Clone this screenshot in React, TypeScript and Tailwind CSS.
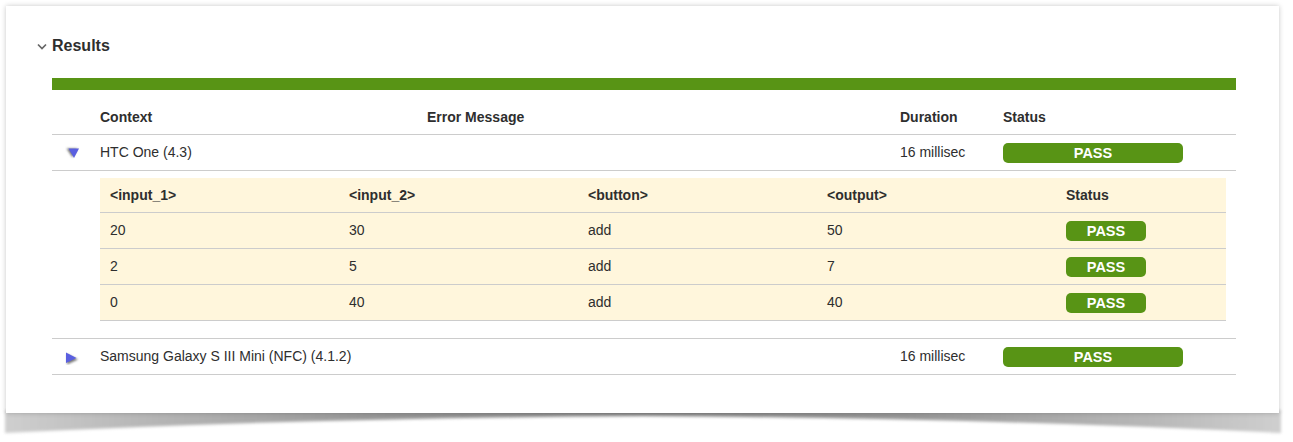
import React from 'react';

const GREEN = 'bg-[#589415]';

const Pass: React.FC<{ wide?: boolean }> = ({ wide }) => (
  <div
    className={`${GREEN} ${wide ? 'w-[180px]' : 'w-[80px]'} h-[20px] pt-[1px] rounded-[5px] flex items-center justify-center text-white font-bold text-[14.5px] leading-none`}
  >
    PASS
  </div>
);

const Triangle: React.FC<{ open?: boolean }> = ({ open }) => (
  <svg width="16" height="16" viewBox="0 0 16 16" className="block">
    <defs>
      <filter id={open ? 'triA' : 'triB'} x="-30%" y="-30%" width="160%" height="160%">
        <feGaussianBlur stdDeviation="0.9" />
      </filter>
    </defs>
    {open ? (
      <>
        <polygon points="1.5,3.5 12.5,3.5 7.5,12.5" fill="#777" filter="url(#triA)" />
        <polygon points="3.5,3.5 14,3.5 9,13" fill="#5a5fe0" />
      </>
    ) : (
      <>
        <polygon points="2,5 2,15.5 13,10.5" fill="#777" filter="url(#triB)" />
        <polygon points="1,3.5 1,14 11.5,9" fill="#5a5fe0" />
      </>
    )}
  </svg>
);

const nested = [
  ['20', '30', 'add', '50'],
  ['2', '5', 'add', '7'],
  ['0', '40', 'add', '40'],
];

const outerCols = 'grid grid-cols-[48px_327px_473px_103px_1fr]';
const innerCols = 'grid grid-cols-[239px_239px_239px_239px_1fr] pl-[10px]';

const DeviceRow: React.FC<{ name: string; open?: boolean; h: string }> = ({ name, open, h }) => (
  <div className={`${outerCols} ${h} items-center border-b border-[#cccccc]`}>
    <div className="pl-[13px]">
      <Triangle open={open} />
    </div>
    <div className="col-span-2">{name}</div>
    <div>16 millisec</div>
    <Pass wide />
  </div>
);

export default function App() {
  return (
    <div className="relative w-[1293px] h-[442px] bg-white overflow-hidden font-['Liberation_Sans',Arial,sans-serif] text-[14px] text-[#2e2e2e]">
      {/* curled page shadow */}
      <svg width="1293" height="442" className="absolute inset-0">
        <defs>
          <linearGradient id="curl" x1="0" x2="1" y1="0" y2="0">
            <stop offset="0" stopColor="#cfcfcf" />
            <stop offset="0.1" stopColor="#b8b8b8" />
            <stop offset="0.3" stopColor="#969696" />
            <stop offset="0.5" stopColor="#858585" />
            <stop offset="0.7" stopColor="#969696" />
            <stop offset="0.9" stopColor="#b8b8b8" />
            <stop offset="1" stopColor="#cfcfcf" />
          </linearGradient>
          <filter id="soft" x="-2%" y="-30%" width="104%" height="160%">
            <feGaussianBlur stdDeviation="1.5" />
          </filter>
        </defs>
        <path d="M5 410 L1281 410 L1281 433 Q 986 418 643 416 Q 300 418 5 433 Z" fill="url(#curl)" filter="url(#soft)" />
      </svg>

      <div className="absolute left-[6px] top-[6px] w-[1273px] h-[407px] bg-white shadow-[0_0_5px_rgba(0,0,0,0.22)]">
        <div className="pl-[46px] pr-[43px]">
          <div className="relative h-[72px] pt-[30px]">
            <svg width="10" height="8" viewBox="0 0 10 8" className="absolute left-[-15px] top-[37px]">
              <path d="M1 1.5 L5 5.5 L9 1.5" fill="none" stroke="#666666" strokeWidth="1.7" />
            </svg>
            <div className="font-bold text-[16px] leading-[20px]">Results</div>
          </div>

          <div className={`${GREEN} h-[12px]`} />

          <div className={`${outerCols} h-[45px] items-center border-b border-[#cccccc] font-bold pt-[10px]`}>
            <div />
            <div>Context</div>
            <div>Error Message</div>
            <div>Duration</div>
            <div>Status</div>
          </div>

          <DeviceRow name="HTC One (4.3)" open h="h-[36px]" />

          <div className="pl-[48px] pr-[10px] pt-[7px] pb-[17px] border-b border-[#cccccc]">
            <div className="bg-[#fff6dc]">
              <div className={`${innerCols} h-[35px] items-center border-b border-[#cccccc] font-bold`}>
                <div>&lt;input_1&gt;</div>
                <div>&lt;input_2&gt;</div>
                <div>&lt;button&gt;</div>
                <div>&lt;output&gt;</div>
                <div>Status</div>
              </div>
              {nested.map((row) => (
                <div key={row[0]} className={`${innerCols} h-[36px] items-center border-b border-[#cccccc]`}>
                  {row.map((cell, i) => (
                    <div key={i}>{cell}</div>
                  ))}
                  <Pass />
                </div>
              ))}
            </div>
          </div>

          <DeviceRow name="Samsung Galaxy S III Mini (NFC) (4.1.2)" h="h-[36px]" />
        </div>
      </div>
    </div>
  );
}
